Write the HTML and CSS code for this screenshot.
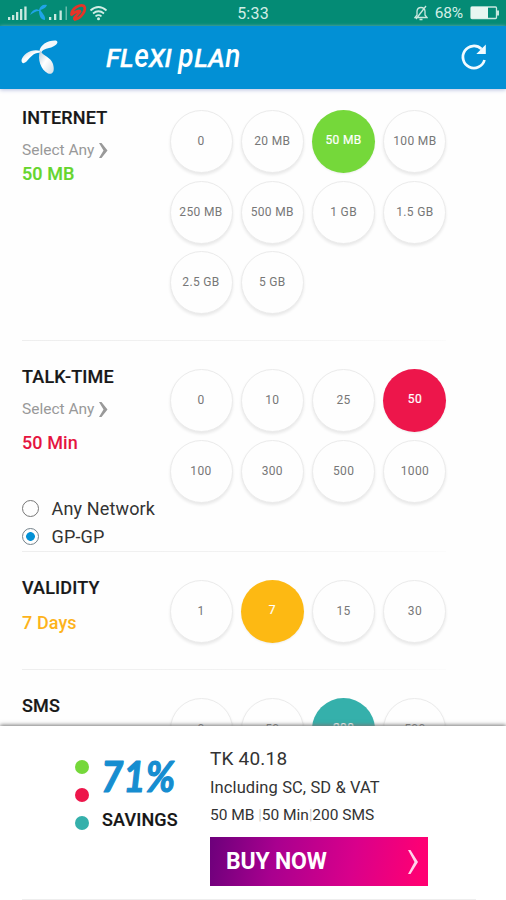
FILE: index.html
```html
<!DOCTYPE html>
<html lang="en">
<head>
<meta charset="utf-8">
<title>Flexi Plan</title>
<link rel="stylesheet" href="styles.css">
</head>
<body>
<div class="app">
  <div class="status">
    <svg class="status-left" width="112" height="26" viewBox="0 0 112 26">
      <g fill="#c9e8df"><path d="M8 17h2.300v3H8zM12 15h2.300v5H12zM16 12h2.300v8H16zM20 9h2.300v11H20zM24.300 6.500h2.300V20h-2.300zM49 17h2.300v3H49zM54 14h2.300v6H54zM59.500 10.500h2.300V20h-2.300z"/><path d="M65.500 6.500h1.500V20h-1.500z" opacity=".5"/></g>
      <path d="M30 15C32 10 36 8 39 10C40 6 43 4 47 5C46 8 43 9 40.500 10C42 13 46 16 45 20C41 20 39 16 39 11C36 11 33 13 30 15Z" fill="#20a4e8"/>
      <path d="M71.500 14.500C72 8 80 4 84 6C87 10 81 18 75 19.500C72.500 18 77 16 80 11.500C79 10 75 12 71.500 14.500Z" fill="none" stroke="#e53428" stroke-width="2.800" stroke-linejoin="round"/>
      <g fill="none" stroke="#d2eee6" stroke-width="1.700"><path d="M90.500 10.500q8-7 16 0M93 13.500q5.500-4.500 11 0M95.500 16.300q3-2.500 6 0"/></g><circle cx="98.500" cy="18.700" r="1.500" fill="#d2eee6"/>
    </svg>
    <span class="clock">5:33</span>
    <div class="status-right">
      <svg width="14" height="16" viewBox="0 0 14 16" fill="none" stroke="#c9e8df" stroke-width="1.300"><path d="M1 12.500h12L11 10V6Q10.500 2.500 7 2.500T3 6v4zM5.500 14.500h3M12 1L2 14"/></svg>
      <span class="percent">68%</span>
      <svg width="30" height="14" viewBox="0 0 30 14"><rect x="1" y="1" width="25.500" height="11.500" rx="1" fill="none" stroke="#c9e8df" stroke-width="1.300"/><path d="M1 1h17v11.500H1z" fill="#e8f6f1"/><path d="M27 4.500h2v5h-2z" fill="#c9e8df"/></svg>
    </div>
  </div>
  <header class="bar">
    <svg class="logo" width="40" height="38" viewBox="0 0 40 38">
      <defs>
        <linearGradient id="blade" x1="0" y1="0" x2="1" y2="1"><stop offset="0" stop-color="#b5cbd9"/><stop offset=".45" stop-color="#fff"/><stop offset="1" stop-color="#d0dde5"/></linearGradient>
      </defs>
      <path d="M19.500 12C11 9 2 15 .5 21C.5 25 3 25 6 22C10 18 13 13 20 14Z" fill="url(#blade)"/>
      <path d="M18.500 12C19 6 27 1 35 1.500C39 3 34 8 28 9C24 10 21 11 20 14Z" fill="#f4f8fb"/>
      <path d="M19 12C16 20 20 31 27 34.500C32 36 34 32 32 25C30 18 22 17 19.500 12Z" fill="url(#blade)"/>
    </svg>
    <h1 class="brand">FL<span class="tall">e</span>XI <span class="tall">p</span>LA<span class="tall">n</span></h1>
    <svg class="reload" width="28" height="28" viewBox="0 0 28 28"><path d="M24.500 17A11 11 0 1 1 21.500 6" fill="none" stroke="#f2fbff" stroke-width="2.700"/><path d="M25.800 1.500v9.500h-9.500z" fill="#f2fbff"/></svg>
  </header>
  <main class="plans">
    <section class="plan internet">
      <div class="info">
        <h2>INTERNET</h2>
        <p class="select">Select Any <svg width="9" height="17" viewBox="0 0 9 17"><path d="M0 1h2.500L8.500 8.500l-6 7.500H0l4.500-7.500z" fill="#999"/></svg></p>
        <p class="value">50 MB</p>
      </div>
      <div class="options">
        <span>0</span><span>20 MB</span><span class="on green">50 MB</span><span>100 MB</span>
        <span>250 MB</span><span>500 MB</span><span>1 GB</span><span>1.5 GB</span>
        <span>2.5 GB</span><span>5 GB</span>
      </div>
    </section>
    <section class="plan talk">
      <div class="info">
        <h2>TALK-TIME</h2>
        <p class="select">Select Any <svg width="9" height="17" viewBox="0 0 9 17"><path d="M0 1h2.500L8.500 8.500l-6 7.500H0l4.500-7.500z" fill="#999"/></svg></p>
        <p class="value">50 Min</p>
        <div class="radio first"><i></i>Any Network</div>
        <div class="radio checked"><i></i>GP-GP</div>
      </div>
      <div class="options">
        <span>0</span><span>10</span><span>25</span><span class="on red">50</span>
        <span>100</span><span>300</span><span>500</span><span>1000</span>
      </div>
    </section>
    <section class="plan validity">
      <div class="info">
        <h2>VALIDITY</h2>
        <p class="value">7 Days</p>
      </div>
      <div class="options">
        <span>1</span><span class="on amber">7</span><span>15</span><span>30</span>
      </div>
    </section>
    <section class="plan sms">
      <div class="info"><h2>SMS</h2></div>
      <div class="options">
        <span>0</span><span>50</span><span class="on teal">200</span><span>500</span>
      </div>
    </section>
  </main>
  <footer class="summary">
    <div class="dots"><i class="green"></i><i class="red"></i><i class="teal"></i></div>
    <div class="savings">
      <svg width="76" height="42" viewBox="0 0 76 42"><text class="rate" x="-1" y="36" textLength="74" lengthAdjust="spacingAndGlyphs">71%</text></svg>
      <div class="label">SAVINGS</div>
    </div>
    <div class="checkout">
      <div class="price">TK 40.18</div>
      <div class="tax">Including SC, SD &amp; VAT</div>
      <div class="bundle">50 MB <b>|</b>50 Min<b>|</b>200 SMS</div>
      <div class="buy">BUY NOW <svg width="12" height="26" viewBox="0 0 12 26"><path d="M1 1h2.500L11 13 3.500 25H1l6.500-12z" fill="#ffd3ea"/></svg></div>
    </div>
  </footer>
</div>
</body>
</html>
```
FILE: styles.css
```css
* { box-sizing: border-box; }
body { margin: 0; background: #fefefe; font-family: Roboto, sans-serif; color: #222; }
h1, h2, p { margin: 0; }
.app { width: 506px; height: 900px; overflow: hidden; display: flex; flex-direction: column; }
.status { flex: none; height: 26px; background: #048b75; color: #d2eee6; display: grid; grid-template-columns: 1fr auto 1fr; align-items: center; }
.clock { font-size: 16px; letter-spacing: .2px; }
.status-right { display: flex; align-items: center; justify-content: flex-end; padding-right: 6px; }
.percent { font-size: 15.500px; margin: 0 7px 0 7px; letter-spacing: -.2px; }
.bar { flex: none; height: 63px; background: #0290d5; display: flex; align-items: center; padding: 0 18px 0 21px; box-shadow: 0 1px 4px #b9bfdf; z-index: 1; }
.logo { margin-top: 1px; }
.brand { margin-left: 45px; color: #fff; font: italic 500 26px/32px Roboto, sans-serif; letter-spacing: 0; white-space: nowrap; -webkit-text-stroke: .3px #fff; paint-order: stroke; }
.tall { font-size: 33px; line-height: 20px; display: inline-block; transform: scaleX(.85); margin: 0 -1px; -webkit-text-stroke: 0; }
.reload { margin-left: auto; margin-top: -2px; }
.plans { flex: none; height: 637px; overflow: hidden; }
.plan { display: flex; padding: 0 60px 0 22px; position: relative; }
.plan::after { content: ""; position: absolute; left: 22px; right: 60px; bottom: 0; height: 1px; background: linear-gradient(90deg, #eee, #f3f3f3 65%, #fbfbfb); }
.internet { height: 252px; padding-top: 21px; }
.talk { height: 211px; padding-top: 28px; }
.validity { height: 118px; padding-top: 28px; }
.sms { height: 120px; padding-top: 28px; }
.info { width: 147.500px; flex: none; white-space: nowrap; }
h2 { font-size: 18px; line-height: 20px; font-weight: 500; color: #181818; margin-top: -2px; letter-spacing: .15px; -webkit-text-stroke: .2px #181818; }
.select { display: flex; align-items: center; gap: 5px; font-size: 15.500px; line-height: 20px; height: 20px; margin-top: 12px; color: #999; }
.value { font-size: 18px; line-height: 20px; font-weight: 500; letter-spacing: .1px; }
.internet .value { color: #66d52d; margin-top: 4px; -webkit-text-stroke: .2px #66d52d; }
.talk .value { color: #e5143f; margin-top: 14px; }
.validity .value { color: #fdb31b; margin-top: 15px; }
.radio { display: flex; align-items: center; height: 28px; font-size: 18px; color: #333; letter-spacing: .15px; }
.radio.first { margin-top: 41px; }
.radio i { width: 17px; height: 17px; border: 1.500px solid #777; border-radius: 50%; margin-right: 12.500px; }
.radio.checked i { border-color: #73818a; background: radial-gradient(circle, #0290d5 0 4px, transparent 4.700px); }
.options { display: grid; grid-template-columns: repeat(4, 63px); column-gap: 8.300px; row-gap: 7.500px; align-content: start; }
.options span { width: 63px; height: 63px; border-radius: 50%; border: 1.500px solid #ebebeb; box-shadow: 0 2px 3px #e8e8e8; background: #fefefe; display: flex; align-items: center; justify-content: center; font-size: 12px; letter-spacing: .35px; color: #777; white-space: nowrap; padding-bottom: 1px; }
.options .on { border: 0; color: #fff; padding-bottom: 4px; box-shadow: 0 1px 2px #eee; -webkit-text-stroke: .2px #fff; }
.options .green, .dots .green { background: #75d83a; }
.options .red, .dots .red { background: #ed164b; }
.options .amber { background: #fdb913; }
.options .teal, .dots .teal { background: #35b0ab; }
.summary { flex: none; height: 174px; background: #fff; display: flex; position: relative; box-shadow: 0 -1px 4px #777; }
.summary::after { content: ""; position: absolute; left: 22px; right: 30px; bottom: 0; height: 1px; background: #eee; }
.dots { display: flex; flex-direction: column; gap: 14px; padding: 34px 0 0 75px; }
.dots i { width: 14px; height: 14px; border-radius: 50%; }
.savings { width: 108px; margin-left: 13px; padding-top: 30px; }
.savings svg { display: block; }
.rate { font: italic 700 42px Lato, sans-serif; fill: #168dd0; stroke: #168dd0; stroke-width: 1.200px; stroke-linejoin: round; }
.label { font-size: 18px; line-height: 20px; font-weight: 500; color: #151515; margin: 12px 0 0 0; letter-spacing: .15px; -webkit-text-stroke: .2px #151515; }
.checkout { width: 218px; padding-top: 21px; white-space: nowrap; color: #333; }
.price { font-size: 19px; line-height: 24px; letter-spacing: .2px; }
.tax { font-size: 16.500px; line-height: 20px; margin-top: 7px; letter-spacing: .1px; }
.bundle { font-size: 15.500px; line-height: 20px; margin-top: 7px; }
.bundle b { font-weight: 300; color: #bbb; }
.buy { height: 49px; margin-top: 12px; display: flex; align-items: center; justify-content: space-between; padding: 0 9px 0 16px; color: #fff; font-size: 23px; letter-spacing: -.2px; font-weight: 700; background: linear-gradient(100deg, #6c007b, #a9008f 30%, #d9008b 65%, #ff0073 96%); }
```
